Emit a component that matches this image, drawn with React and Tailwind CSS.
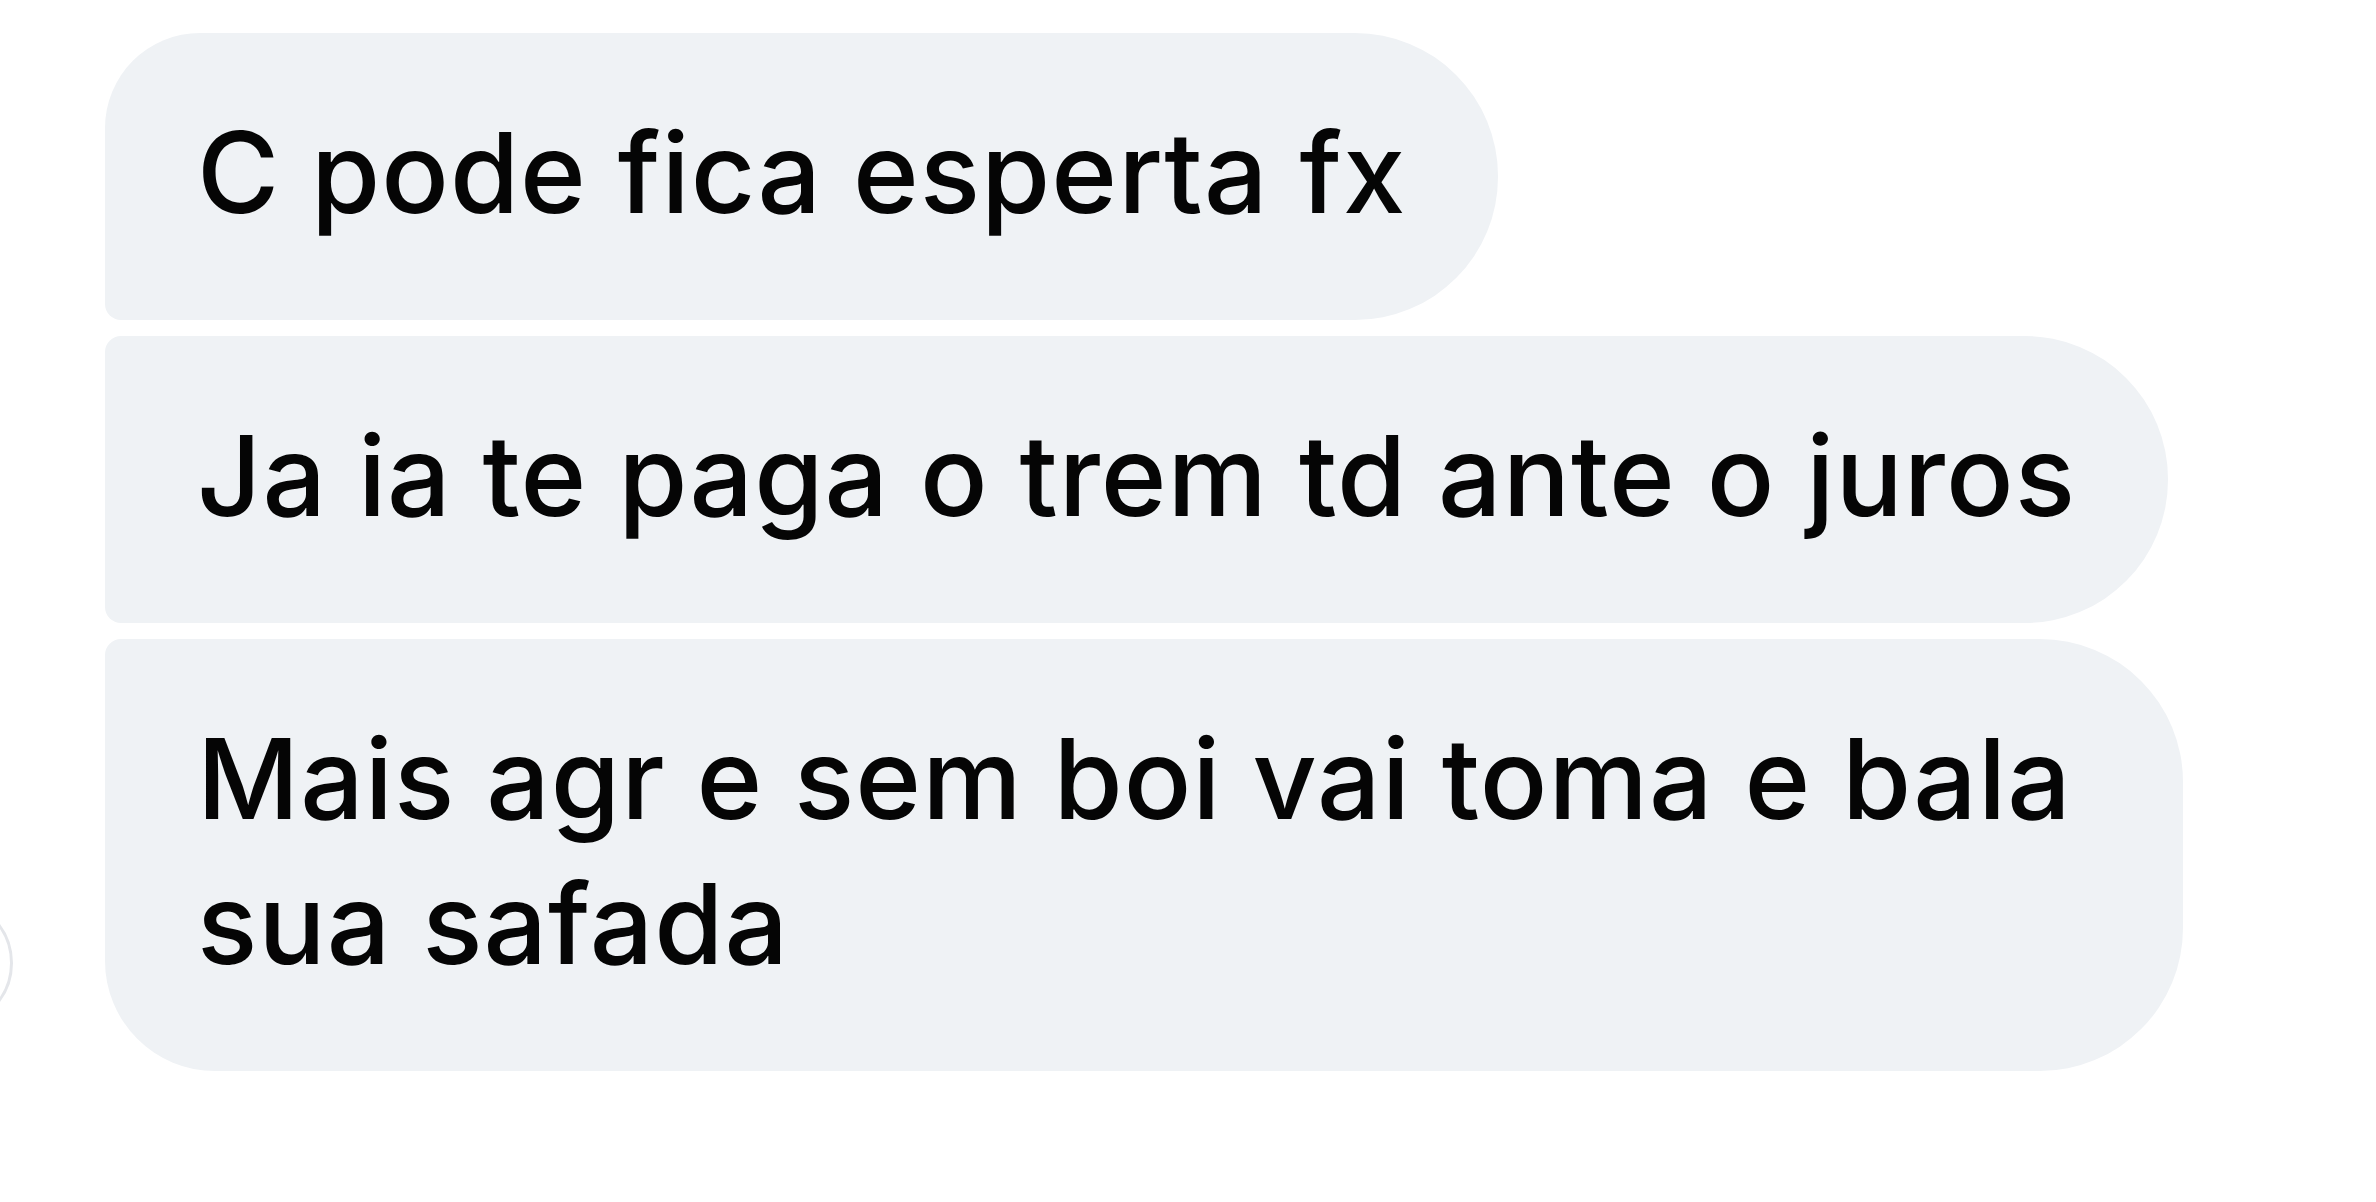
export default function App() {
  const font = { fontFamily: 'Inter, "Liberation Sans", sans-serif' };

  return (
    <div
      className="w-[2376px] h-[1202px] bg-white overflow-hidden flex flex-col items-start gap-[16px] pt-[33px] pl-[105px] text-[#050505] font-medium tracking-[1px]"
      style={font}
    >
      {/* first message of the group */}
      <div className="bg-[#eff2f5] rounded-tl-[95px] rounded-bl-[16px] rounded-r-[143px] px-[92px] pt-[67px] pb-[75px] text-[112px] leading-[145px]">
        C pode fica esperta fx
      </div>

      <div className="bg-[#eff2f5] rounded-l-[16px] rounded-r-[143px] px-[92px] pt-[67px] pb-[75px] text-[112px] leading-[145px]">
        Ja ia te paga o trem td ante o juros
      </div>

      {/* last message, with the sender avatar peeking in on the left */}
      <div className="flex items-end -ml-[222px]">
        <div className="w-[130px] h-[130px] shrink-0 rounded-full border-[3px] border-[#e4e6ea] bg-white mb-[43px] mr-[92px]"></div>
        <div className="max-w-[2078px] bg-[#eff2f5] rounded-tl-[16px] rounded-bl-[110px] rounded-r-[143px] px-[92px] pt-[67px] pb-[75px] text-[112px] leading-[145px]">
          Mais agr e sem boi vai toma e bala sua safada
        </div>
      </div>
    </div>
  );
}
